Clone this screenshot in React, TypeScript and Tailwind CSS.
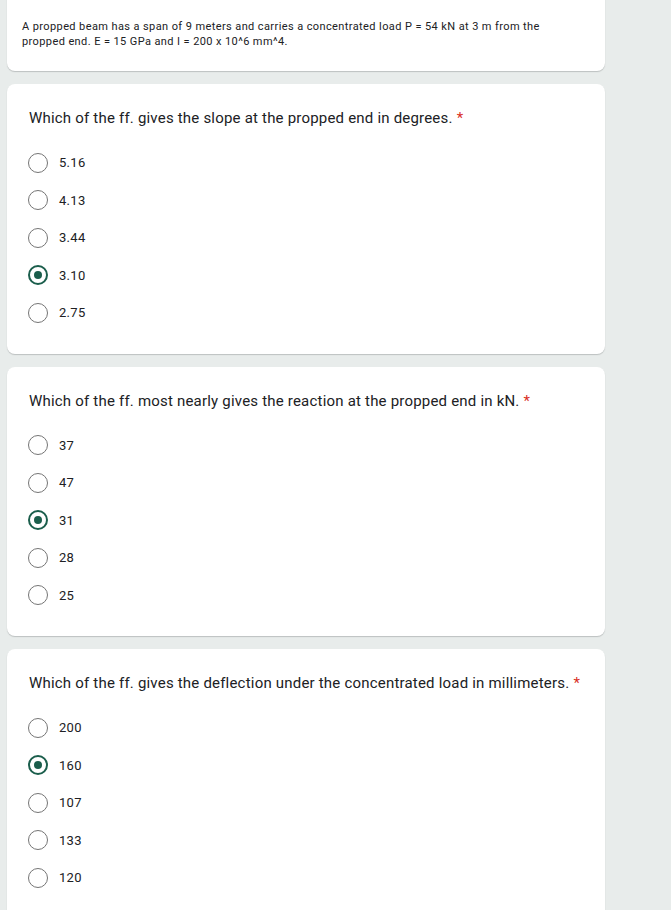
import React from "react";

type Question = {
  title: string;
  options: string[];
  picked: number;
};

const questions: Question[] = [
  {
    title: "Which of the ff. gives the slope at the propped end in degrees.",
    options: ["5.16", "4.13", "3.44", "3.10", "2.75"],
    picked: 3,
  },
  {
    title: "Which of the ff. most nearly gives the reaction at the propped end in kN.",
    options: ["37", "47", "31", "28", "25"],
    picked: 2,
  },
  {
    title: "Which of the ff. gives the deflection under the concentrated load in millimeters.",
    options: ["200", "160", "107", "133", "120"],
    picked: 1,
  },
];

function Radio({ checked }: { checked: boolean }) {
  if (checked) {
    return (
      <div className="w-[20px] h-[20px] rounded-full border-2 border-[#1b5e4c] flex items-center justify-center">
        <div className="w-[8px] h-[8px] rounded-full bg-[#1b5e4c]" />
      </div>
    );
  }
  return <div className="w-[20px] h-[20px] rounded-full border-[1.5px] border-[#757575]" />;
}

function QuestionCard({ q }: { q: Question }) {
  return (
    <div className="w-[598px] bg-white rounded-lg shadow-[0_1px_1px_rgba(60,64,67,0.25)] pl-[21px] pr-[8px] pt-[24px] pb-[22px]">
      <div
        className="text-[15px] leading-[20px] text-[#202124] pl-[1px] tracking-[0.2px] whitespace-nowrap"
        style={{ fontFamily: "Roboto, 'Open Sans', sans-serif" }}
      >
        {q.title}
        <span className="text-[#d93025] ml-[4px]">*</span>
      </div>
      <div className="mt-[16px] flex flex-col">
        {q.options.map((opt, i) => (
          <div key={opt} className="h-[37.5px] flex items-center gap-[11px]">
            <Radio checked={i === q.picked} />
            <span
              className="text-[13px] text-[#202124] tracking-[0.3px]"
              style={{ fontFamily: "Roboto, sans-serif" }}
            >
              {opt}
            </span>
          </div>
        ))}
      </div>
    </div>
  );
}

export default function App() {
  return (
    <div className="min-h-screen w-[671px] bg-[#e8eceb] pl-[7px] overflow-hidden">
      <div className="flex flex-col gap-[13px]">
        <div className="w-[598px] bg-white rounded-lg shadow-[0_1px_1px_rgba(60,64,67,0.25)] -mt-[8px] pt-[27px] pb-[22px] px-[15px]">
          <p
            className="text-[11px] leading-[15px] text-[#202124] tracking-[0.4px]"
            style={{ fontFamily: "Roboto, sans-serif" }}
          >
            A propped beam has a span of 9 meters and carries a concentrated load P = 54 kN at 3 m from the
            <br />
            propped end. E = 15 GPa and I = 200 x 10^6 mm^4.
          </p>
        </div>
        {questions.map((q) => (
          <QuestionCard key={q.title} q={q} />
        ))}
      </div>
    </div>
  );
}
